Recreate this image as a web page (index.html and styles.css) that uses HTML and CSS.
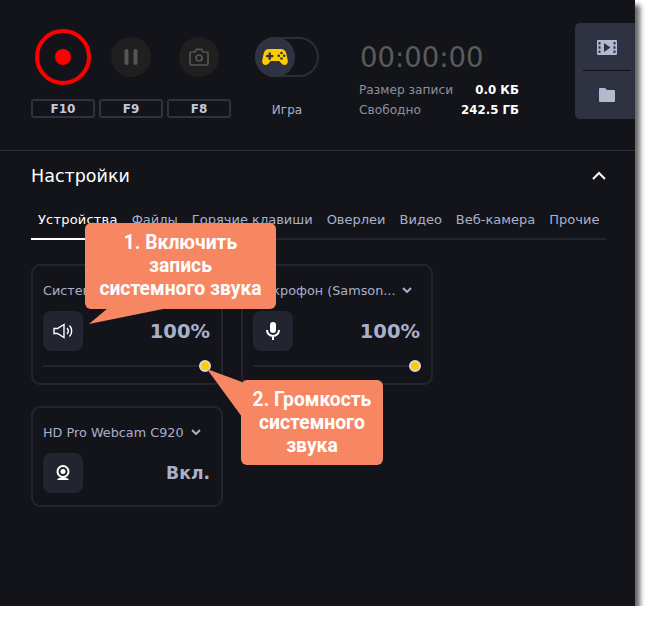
FILE: index.html
```html
<!DOCTYPE html>
<html lang="ru">
<head>
  <meta charset="UTF-8" />
  <title>Настройки записи</title>
  <link rel="stylesheet" href="styles.css">
</head>
<body>
  <div class="window">
    <section class="top">
      <div class="controls">
        <div class="ctrl"><button class="rec"><span class="rec-dot"></span></button></div>
        <div class="ctrl">
          <button class="round">
            <svg width="14" height="16" viewBox="0 0 14 16"><rect x="0.5" y="0" width="4" height="16" rx="2" fill="#555"/><rect x="9.5" y="0" width="4" height="16" rx="2" fill="#555"/></svg>
          </button>
        </div>
        <div class="ctrl">
          <button class="round">
            <svg width="20" height="18" viewBox="0 0 20 18" fill="none" stroke="#555" stroke-width="1.7"><path d="M2.5 4h3.5l1.5-2.7h5L14 4h3.5a1.5 1.5 0 0 1 1.5 1.5v10a1.5 1.5 0 0 1-1.5 1.5h-15A1.5 1.5 0 0 1 1 15.500v-10A1.500 1.500 0 0 1 2.500 4z"/><circle cx="10" cy="10" r="3"/></svg>
          </button>
        </div>
        <div class="ctrl game-ctrl">
          <div class="toggle">
            <span class="toggle-knob">
              <svg width="26" height="18" viewBox="0 0 26 18"><path fill="#ffcc00" d="M7 1h12c3 0 4.500 1.500 5.300 4.500l1.400 6.500c.6 3-1 5-3.200 5-1.800 0-2.800-1-3.800-2.200L17.500 13h-9l-1.200 1.800C6.300 16 5.300 17 3.500 17 1.300 17-.3 15 .3 12l1.400-6.500C2.500 2.500 4 1 7 1z"/><path fill="#2f3240" d="M6.500 4.500h2.400v2.400h2.400v2.400H8.900v2.400H6.500V9.300H4.100V6.900h2.400z"/><circle cx="19.500" cy="5" r="1.300" fill="#2f3240"/><circle cx="19.500" cy="10.500" r="1.300" fill="#2f3240"/><circle cx="16.800" cy="7.800" r="1.300" fill="#2f3240"/><circle cx="22.200" cy="7.800" r="1.300" fill="#2f3240"/></svg>
            </span>
          </div>
        </div>
        <span class="key">F10</span>
        <span class="key">F9</span>
        <span class="key">F8</span>
        <span class="game-label">Игра</span>
      </div>
      <div class="stats">
        <div class="timer">00:00:00</div>
        <div class="stat-row"><span>Размер записи</span><b>0.0 КБ</b></div>
        <div class="stat-row"><span>Свободно</span><b>242.5 ГБ</b></div>
      </div>
      <div class="side">
        <div class="side-btn">
          <svg width="20" height="15" viewBox="0 0 20 15"><path fill="#b4b9d2" fill-rule="evenodd" d="M1 0h18a1 1 0 0 1 1 1v13a1 1 0 0 1-1 1H1a1 1 0 0 1-1-1V1a1 1 0 0 1 1-1zM1.500 2v2.500h2V2zm0 4.250v2.500h2v-2.500zm0 4.250V13h2v-2.500zm15-8.500v2.500h2V2zm0 4.250v2.500h2v-2.500zm0 4.250V13h2v-2.500zM7 3v9l6.500-4.500z"/></svg>
        </div>
        <div class="side-line"></div>
        <div class="side-btn">
          <svg width="16" height="14" viewBox="0 0 16 14"><path fill="#b4b9d2" d="M0 1a1 1 0 0 1 1-1h5l2 2h7a1 1 0 0 1 1 1v10a1 1 0 0 1-1 1H1a1 1 0 0 1-1-1z"/></svg>
        </div>
      </div>
    </section>

    <section class="settings">
      <div class="settings-head">
        <h2>Настройки</h2>
        <svg width="14" height="9" viewBox="0 0 14 9" fill="none" stroke="#fff" stroke-width="2"><path d="M1 8l6-6 6 6"/></svg>
      </div>
      <nav class="tabs">
        <span class="tab active">Устройства</span>
        <span class="tab">Файлы</span>
        <span class="tab">Горячие клавиши</span>
        <span class="tab">Оверлеи</span>
        <span class="tab">Видео</span>
        <span class="tab">Веб-камера</span>
        <span class="tab">Прочие</span>
      </nav>
      <div class="cards">
        <div class="card">
          <div class="card-title"><span class="card-name">Системный звук</span><svg class="caret" width="10" height="6" viewBox="0 0 10 6" fill="none" stroke="#a9b0cc" stroke-width="2"><path d="M1 1l4 4 4-4"/></svg></div>
          <div class="card-row">
            <span class="icon-btn">
              <svg width="20" height="16" viewBox="0 0 20 16" fill="none" stroke="#fff" stroke-width="1.400"><path d="M1 5.500h3.500L11 1.500v13l-6.500-4H1z"/><path d="M14 5a4.500 4.500 0 0 1 0 6"/><path d="M16.500 2.500a8 8 0 0 1 0 11"/></svg>
            </span>
            <span class="level">100%</span>
          </div>
          <div class="slider"><span class="knob"></span></div>
        </div>
        <div class="card">
          <div class="card-title"><span class="card-name">Микрофон (Samson...</span><svg class="caret" width="10" height="6" viewBox="0 0 10 6" fill="none" stroke="#a9b0cc" stroke-width="2"><path d="M1 1l4 4 4-4"/></svg></div>
          <div class="card-row">
            <span class="icon-btn">
              <svg width="14" height="18" viewBox="0 0 14 18"><rect x="4" y="0" width="6" height="11" rx="3" fill="#fff"/><path d="M1 8a6 6 0 0 0 12 0M7 14v4" fill="none" stroke="#fff" stroke-width="2"/></svg>
            </span>
            <span class="level">100%</span>
          </div>
          <div class="slider"><span class="knob"></span></div>
        </div>
        <div class="card card-cam">
          <div class="card-title"><span class="card-name">HD Pro Webcam C920</span><svg class="caret" width="10" height="6" viewBox="0 0 10 6" fill="none" stroke="#a9b0cc" stroke-width="2"><path d="M1 1l4 4 4-4"/></svg></div>
          <div class="card-row">
            <span class="icon-btn">
              <svg width="14" height="16" viewBox="0 0 14 16"><circle cx="7" cy="6.500" r="5.500" fill="none" stroke="#fff" stroke-width="2"/><circle cx="7" cy="6.500" r="2.500" fill="#fff"/><path d="M1 15c1-2 3-2.500 6-2.500s5 .5 6 2.500z" fill="#fff"/></svg>
            </span>
            <span class="level level-on">Вкл.</span>
          </div>
        </div>
      </div>
    </section>

    <div class="callout callout-one">1. Включить<br>запись<br>системного звука</div>
    <div class="callout callout-two">2. Громкость<br>системного<br>звука</div>
    <svg class="tails" width="635" height="606"><polygon points="108,308 168,308 89,324" fill="#f78762"/><polygon points="242,382 242,417 207,369" fill="#f78762"/></svg>
  </div>
</body>
</html>
```

FILE: styles.css
```css
body {
  margin: 0;
  background: #fff;
  font-family: "DejaVu Sans", sans-serif;
}
.window {
  position: relative;
  width: 635px;
  height: 606px;
  background: #131419;
  box-shadow: 5px 5px 5px rgba(0, 0, 0, 0.6);
}
.top {
  display: flex;
  height: 151px;
  box-sizing: border-box;
  border-bottom: 1px solid #2f3240;
  padding: 23px 0 0 31px;
}
.controls {
  display: grid;
  grid-template-columns: 64px 64px 64px 84px;
  grid-template-rows: 68px 19px;
  column-gap: 4px;
  row-gap: 8px;
}
.ctrl {
  display: flex;
  justify-content: center;
  align-items: center;
}
.game-ctrl, .game-label {
  padding-left: 20px;
}
button {
  padding: 0;
  border: none;
  background: none;
  display: flex;
  align-items: center;
  justify-content: center;
}
.rec {
  width: 56px;
  height: 56px;
  box-sizing: border-box;
  border: 4px solid #ff0000;
  border-radius: 50%;
}
.rec-dot {
  width: 16px;
  height: 16px;
  border-radius: 50%;
  background: #ff0000;
}
.round {
  width: 40px;
  height: 40px;
  border-radius: 50%;
  background: #1f1f1f;
}
.toggle {
  width: 64px;
  height: 40px;
  box-sizing: border-box;
  border: 2px solid #2a2d3a;
  border-radius: 20px;
}
.toggle-knob {
  display: flex;
  align-items: center;
  justify-content: center;
  width: 40px;
  height: 40px;
  margin: -2px;
  border-radius: 50%;
  background: #2f3240;
}
.key {
  box-sizing: border-box;
  height: 19px;
  border: 2px solid #2f3240;
  border-radius: 3px;
  color: #c3c8dc;
  font-size: 12px;
  font-weight: bold;
  line-height: 17px;
  text-align: center;
}
.game-label {
  color: #a9b0cc;
  font-size: 12px;
  line-height: 22px;
  text-align: center;
}
.stats {
  width: 160px;
  margin-left: 40px;
}
.timer {
  margin: 18px 0 0 1px;
  color: #5a5a5a;
  font-size: 27.500px;
  line-height: 32px;
}
.stat-row {
  display: flex;
  justify-content: space-between;
  color: #8c90a0;
  font-size: 12.200px;
  line-height: 20px;
}
.timer + .stat-row {
  margin-top: 7px;
}
.stat-row b {
  color: #fff;
  font-size: 11.800px;
}
.side {
  width: 60px;
  height: 96px;
  margin-left: 56px;
  background: #2f3240;
  border-radius: 5px 0 0 5px;
}
.side-btn {
  display: flex;
  align-items: center;
  justify-content: center;
  height: 48px;
  padding-left: 3px;
}
.side-line {
  height: 1px;
  margin: -1px 4px 0 8px;
  background: #0f1014;
}
.settings {
  padding: 0 29px 0 31px;
}
.settings-head {
  display: flex;
  align-items: center;
  justify-content: space-between;
  height: 49px;
}
.settings-head h2 {
  margin: 0;
  color: #fff;
  font-size: 17.500px;
  font-weight: normal;
}
.tabs {
  display: flex;
  height: 40px;
  box-sizing: border-box;
  padding-top: 10px;
  border-bottom: 2px solid #23242f;
}
.tab {
  height: 28px;
  padding: 0 7px;
  color: #a9b0cc;
  font-size: 13px;
  line-height: 20px;
  white-space: nowrap;
}
.tab.active {
  color: #fff;
  border-bottom: 2px solid #fff;
  letter-spacing: 0.2px;
}
.cards {
  display: grid;
  grid-template-columns: 192px 192px;
  column-gap: 18px;
  row-gap: 21px;
  margin-top: 24px;
}
.card {
  box-sizing: border-box;
  height: 121px;
  padding: 12px 10px 0;
  border: 2px solid #23242f;
  border-radius: 9px;
}
.card-cam {
  height: 101px;
}
.card-title {
  display: flex;
  align-items: center;
  gap: 7px;
  height: 24px;
  color: #a9b0cc;
  font-size: 12.800px;
}
.card-name {
  white-space: nowrap;
}
.card-row {
  display: flex;
  align-items: center;
  justify-content: space-between;
  margin-top: 9px;
}
.icon-btn {
  display: flex;
  align-items: center;
  justify-content: center;
  width: 40px;
  height: 40px;
  border-radius: 8px;
  background: #22242f;
}
.level {
  padding-right: 1px;
  color: #a9b0cc;
  font-size: 19.500px;
  font-weight: bold;
}
.level-on {
  font-size: 17.200px;
}
.slider {
  position: relative;
  height: 2px;
  margin-top: 14px;
  background: #23242f;
}
.knob {
  position: absolute;
  right: 0;
  top: -5px;
  width: 8px;
  height: 8px;
  border: 2px solid #d8d8e0;
  border-radius: 50%;
  background: #ffcc00;
}
.callout {
  position: absolute;
  box-sizing: border-box;
  padding: 8px 0;
  background: #f78762;
  border-radius: 6px;
  color: #fff;
  font-family: Roboto, sans-serif;
  font-size: 19.300px;
  font-weight: bold;
  line-height: 23px;
  text-align: center;
}
.callout-one {
  left: 85px;
  top: 223px;
  width: 191px;
  height: 86px;
}
.callout-two {
  left: 241px;
  top: 380px;
  width: 142px;
  height: 85px;
}
.tails {
  position: absolute;
  left: 0;
  top: 0;
  pointer-events: none;
}
```
